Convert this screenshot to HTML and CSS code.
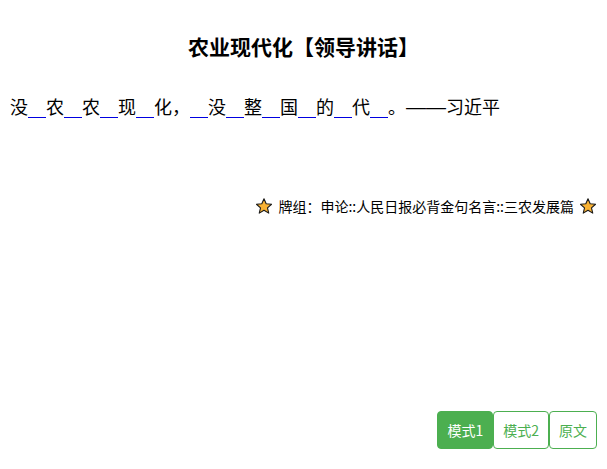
FILE: index.html
```html
<!DOCTYPE html>
<html lang="zh-CN">
<head>
<meta charset="utf-8">
<title>农业现代化【领导讲话】</title>
<link rel="stylesheet" href="styles.css">
</head>
<body>
<main class="page">
  <h1 class="title">农业现代化【领导讲话】</h1>
  <p class="quote">没<span class="blank"></span>农<span class="blank"></span>农<span class="blank"></span>现<span class="blank"></span>化，<span class="blank"></span>没<span class="blank"></span>整<span class="blank"></span>国<span class="blank"></span>的<span class="blank"></span>代<span class="blank"></span>。<span class="dash">——</span>习近平</p>
  <div class="tag-row">
    <svg class="star" viewBox="1 1 22 22"><path d="M12 2l3 6.900 7.400.7-5.600 4.900 1.700 7.300L12 17.900l-6.500 3.900 1.700-7.300L1.600 9.600 9 8.900z"/></svg>
    <span class="tag-text">牌组：申论::人民日报必背金句名言::三农发展篇</span>
    <svg class="star" viewBox="1 1 22 22"><path d="M12 2l3 6.900 7.400.7-5.600 4.900 1.700 7.300L12 17.900l-6.500 3.900 1.700-7.300L1.600 9.600 9 8.900z"/></svg>
  </div>
  <div class="modes">
    <button class="mode active">模式1</button>
    <button class="mode">模式2</button>
    <button class="mode">原文</button>
  </div>
</main>
</body>
</html>
```
FILE: styles.css
```css
html, body {
  margin: 0;
  padding: 0;
  background: #fff;
}
.page {
  box-sizing: border-box;
  height: 469px;
  padding: 0 10px 20px;
  display: flex;
  flex-direction: column;
  font-family: "Noto Sans CJK SC", sans-serif;
  color: #000;
}
.title {
  margin: 31px 0 0;
  font-size: 21px;
  line-height: 30px;
  font-weight: 700;
  text-align: center;
}
.quote {
  margin: 30px 0 0;
  font-size: 18px;
  line-height: 30px;
}
.blank {
  display: inline-block;
  width: 18px;
  height: 18px;
  vertical-align: -4px;
  box-sizing: border-box;
  border-bottom: 1px solid #0000e0;
}
.dash {
  font-family: "Liberation Sans", sans-serif;
  font-size: 20px;
  line-height: 1;
}
.tag-row {
  margin-top: 75px;
  padding-right: 1px;
  display: flex;
  justify-content: flex-end;
  align-items: center;
  gap: 6px;
  height: 20px;
  font-size: 14px;
}
.star {
  width: 16px;
  height: 16px;
  fill: #f9b233;
  stroke: #1a1a1a;
  stroke-width: 1.500;
  stroke-linejoin: round;
}
.tag-text {
  margin-right: 0;
}
.modes {
  margin-top: auto;
  display: flex;
  justify-content: flex-end;
}
.mode {
  height: 38px;
  padding: 0 9px;
  border: 1px solid #4caf50;
  border-radius: 4px;
  background: #fff;
  color: #4caf50;
  font-family: inherit;
  font-size: 14px;
  line-height: 20px;
}
.mode.active {
  background: #4caf50;
  color: #fff;
}
```
